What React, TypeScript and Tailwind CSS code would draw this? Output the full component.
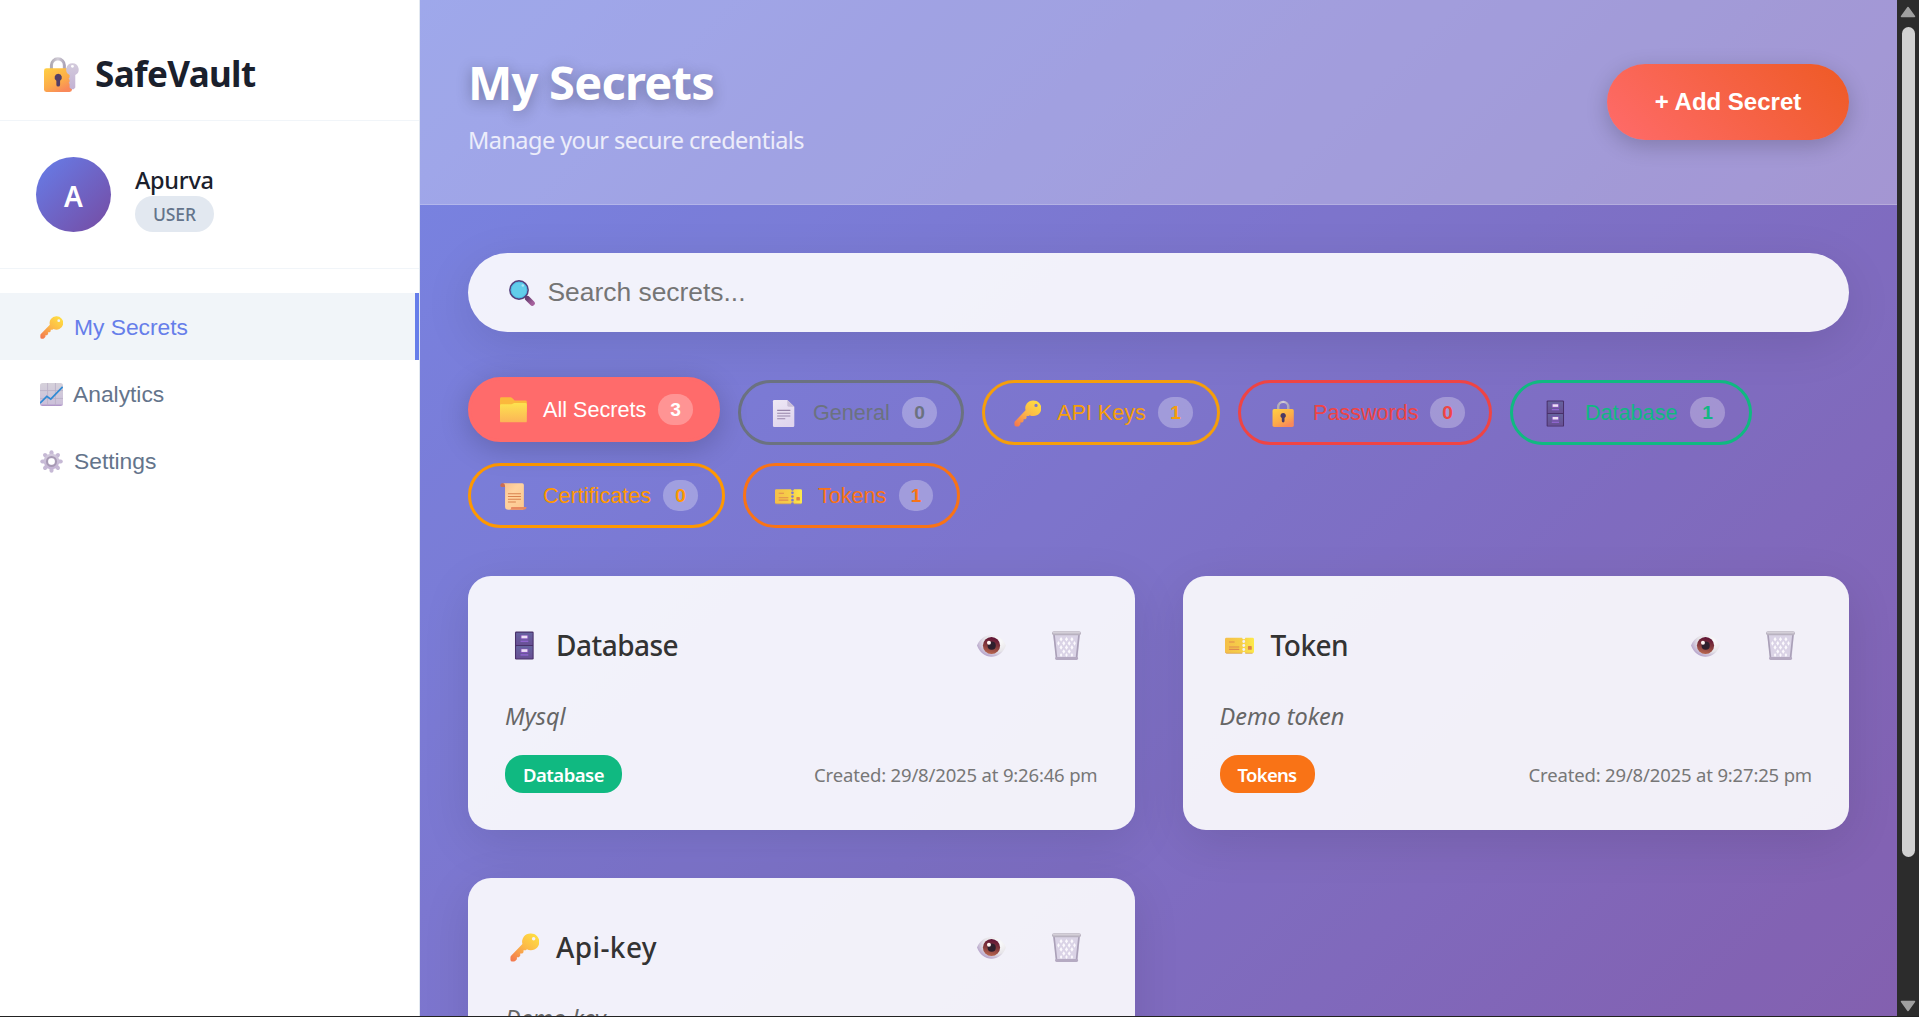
import type { ReactNode } from "react";

const NOTO = "font-['Noto_Sans',sans-serif]";
const ARIAL = "font-['Liberation_Sans',sans-serif]";

function Defs() {
  return (
    <svg className="absolute h-0 w-0" aria-hidden="true">
      <defs>
        <linearGradient id="gold" x1="0.9" y1="0" x2="0.1" y2="1">
          <stop offset="0" stopColor="#ffe141" />
          <stop offset="0.5" stopColor="#fcb848" />
          <stop offset="1" stopColor="#f3794f" />
        </linearGradient>
        <linearGradient id="body" x1="0" y1="0" x2="0.6" y2="1">
          <stop offset="0" stopColor="#ffd044" />
          <stop offset="0.65" stopColor="#fcab49" />
          <stop offset="1" stopColor="#f9895a" />
        </linearGradient>
        <linearGradient id="steel" x1="0" y1="0" x2="1" y2="0">
          <stop offset="0" stopColor="#b0abb5" />
          <stop offset="0.5" stopColor="#d2cdd8" />
          <stop offset="1" stopColor="#ada5b8" />
        </linearGradient>
        <linearGradient id="lilac" x1="0" y1="0" x2="0" y2="1">
          <stop offset="0" stopColor="#d3cbdc" />
          <stop offset="1" stopColor="#c3b2d4" />
        </linearGradient>
        <linearGradient id="chart" x1="0" y1="0" x2="0" y2="1">
          <stop offset="0" stopColor="#d5d1da" />
          <stop offset="0.9" stopColor="#ccc0da" />
          <stop offset="1" stopColor="#a98cc4" />
        </linearGradient>
        <linearGradient id="folder" x1="0" y1="0" x2="0" y2="1">
          <stop offset="0" stopColor="#fde34f" />
          <stop offset="1" stopColor="#fcb457" />
        </linearGradient>
        <linearGradient id="page" x1="0" y1="0" x2="0.4" y2="1">
          <stop offset="0" stopColor="#eee8f5" />
          <stop offset="1" stopColor="#e0d6ee" />
        </linearGradient>
        <linearGradient id="cabinet" x1="0" y1="0" x2="0" y2="1">
          <stop offset="0" stopColor="#66649f" />
          <stop offset="1" stopColor="#684f94" />
        </linearGradient>
        <linearGradient id="scroll" x1="0" y1="0" x2="1" y2="1">
          <stop offset="0" stopColor="#f9bf8d" />
          <stop offset="0.4" stopColor="#ffd3a0" />
          <stop offset="1" stopColor="#fbc78c" />
        </linearGradient>
        <linearGradient id="ticket" x1="0" y1="0" x2="1" y2="0">
          <stop offset="0" stopColor="#f5bf49" />
          <stop offset="0.6" stopColor="#f6d048" />
          <stop offset="1" stopColor="#fdea4c" />
        </linearGradient>
        <radialGradient id="eyeball" cx="0.7" cy="0.3" r="0.85">
          <stop offset="0" stopColor="#ffffff" />
          <stop offset="0.55" stopColor="#e6e4e8" />
          <stop offset="1" stopColor="#a58cc0" />
        </radialGradient>
        <linearGradient id="iris" x1="0.6" y1="0" x2="0.4" y2="1">
          <stop offset="0" stopColor="#5c1035" />
          <stop offset="0.5" stopColor="#82383c" />
          <stop offset="1" stopColor="#b9674f" />
        </linearGradient>
        <linearGradient id="handle" x1="0" y1="0" x2="1" y2="1">
          <stop offset="0" stopColor="#6b3f72" />
          <stop offset="1" stopColor="#a5609c" />
        </linearGradient>
      </defs>
    </svg>
  );
}

function Icon({ className, children }: { className: string; children: ReactNode }) {
  return (
    <svg viewBox="0 0 32 32" className={`shrink-0 ${className}`} aria-hidden="true">
      {children}
    </svg>
  );
}

type IconProps = { className: string };

function VaultLogo({ className }: IconProps) {
  return (
    <Icon className={className}>
      <path d="M6.8 12V7.600a5.900 5.900 0 0 1 11.800 0V12" fill="none" stroke="url(#steel)" strokeWidth="2.800" />
      <rect x="0" y="10.300" width="25.600" height="21.700" rx="2.200" fill="url(#body)" />
      <path d="M13 15.400a3.400 3.400 0 0 0-1.700 6.300v3.600a1.700 1.700 0 0 0 3.400 0v-3.600A3.400 3.400 0 0 0 13 15.400z" fill="#533f66" />
      <path
        d="M26 5.800a5.600 5.600 0 0 0-2.600 10.600v2.200l-.9 1.200.9 1.300v1.300l-.8 1.100.8 1.200v3.200l1.600 1.500h2.200l1.400-1.500V16.400A5.600 5.600 0 0 0 26 5.800zm0 1.400a1.300 1.300 0 1 1 0 2.700 1.300 1.300 0 0 1 0-2.700z"
        fill="url(#lilac)"
        fillRule="evenodd"
      />
    </Icon>
  );
}

function KeyIcon({ className }: IconProps) {
  return (
    <Icon className={className}>
      <path
        d="M22.5.5a9.200 9.200 0 0 0-8.800 11.700L1.200 25.200Q.5 26 .5 27v2.200a2.200 2.200 0 0 0 2.300 2.300h1.600q1 0 1.700-.8l1.500-1.700v-2.300h2.200l1.500-1.600v-2.400h2.300l1.300-1.400v-2.200h2.500l1.300-1.100A9.300 9.300 0 1 0 22.500.5zm3.600 4a1.900 1.900 0 1 1 0 3.900 1.900 1.900 0 0 1 0-3.900z"
        fill="url(#gold)"
        fillRule="evenodd"
      />
    </Icon>
  );
}

function ChartIcon({ className }: IconProps) {
  return (
    <Icon className={className}>
      <rect width="32" height="32" rx="3.5" fill="url(#chart)" />
      <path d="M10.5 0v31M21.5 0v31M0 10.5h32M0 21.5h32" stroke="#b9afc6" strokeWidth="1.1" />
      <path d="M0 28l9.500-9.500 5.500 4L31.500 5.500" fill="none" stroke="#2f8ad4" strokeWidth="2.400" />
    </Icon>
  );
}

function GearIcon({ className }: IconProps) {
  return (
    <Icon className={className}>
      <g stroke="#c6b9d5" strokeWidth="5.600" strokeLinecap="round">
        <path d="M16 3.200v25.700" />
        <path d="M3.200 16h25.700" />
        <path d="M7 7l18 18M25 7L7 25" />
      </g>
      <circle cx="16" cy="16" r="10.800" fill="url(#lilac)" />
      <circle cx="16" cy="16" r="6.200" fill="none" stroke="#a79ab4" strokeWidth="3" />
      <circle cx="16" cy="16" r="4.600" fill="#ffffff" />
    </Icon>
  );
}

function SearchIcon({ className }: IconProps) {
  return (
    <Icon className={className}>
      <path d="M20.500 20.500l8 8" stroke="#5b3a6c" strokeWidth="3" />
      <path d="M22.800 22.800l5.800 5.800" stroke="url(#handle)" strokeWidth="6.400" strokeLinecap="round" />
      <circle cx="12.300" cy="12.300" r="11.200" fill="#62cdea" stroke="#54407c" strokeWidth="2" />
      <circle cx="12.300" cy="12.300" r="9.700" fill="none" stroke="#48b4e0" strokeWidth="1" />
      <circle cx="17" cy="6.800" r="1.600" fill="#a9e6f5" />
    </Icon>
  );
}

function FolderIcon({ className }: IconProps) {
  return (
    <Icon className={className}>
      <path d="M0 2a1.600 1.600 0 0 1 1.600-1.600h10.800c.9 0 1.400.3 2 .9l3 2.800h12.800A1.600 1.600 0 0 1 31.800 5.700V18H0z" fill="#fbb83c" />
      <path d="M0 10.200q0-1.600 1.600-1.600h12l3.200-1.400h13.400q1.600 0 1.600 1.600v19.800q0 1.400-1.600 1.400H1.600Q0 30 0 28.600z" fill="url(#folder)" />
    </Icon>
  );
}

function PageIcon({ className }: IconProps) {
  return (
    <Icon className={className}>
      <path d="M3.500 1.400Q3.500 0 5 0h15.500L28.800 8v22.600q0 1.400-1.500 1.400H5q-1.500 0-1.500-1.400z" fill="url(#page)" />
      <path d="M20.500 0L28.800 8h-6.600q-1.700 0-1.700-1.700z" fill="#c9bfd8" />
      <path d="M8.500 12.300h15.600M8.500 15.600h15.600M8.500 19h15.600M8.500 22.300h9.600" stroke="#9685a9" strokeWidth="1.200" />
    </Icon>
  );
}

function LockIcon({ className }: IconProps) {
  return (
    <Icon className={className}>
      <path d="M9.700 12V8.200a6 6 0 0 1 12 0V12" fill="none" stroke="url(#steel)" strokeWidth="2.800" />
      <rect x="3" y="10.700" width="25.200" height="21.300" rx="2" fill="url(#body)" />
      <path d="M15.600 15.400a3.200 3.200 0 0 0-1.600 6v3.600a1.600 1.600 0 0 0 3.200 0v-3.600a3.200 3.200 0 0 0-1.600-6z" fill="#4b3a64" />
    </Icon>
  );
}

function CabinetIcon({ className }: IconProps) {
  return (
    <Icon className={className}>
      <rect x="5.500" y="0.500" width="20.600" height="31" rx="1.400" fill="#49306a" />
      <rect x="6.700" y="1.800" width="18.200" height="13.600" rx="0.600" fill="url(#cabinet)" />
      <rect x="6.700" y="16.600" width="18.200" height="13.800" rx="0.600" fill="url(#cabinet)" />
      <rect x="11.600" y="4.400" width="8.600" height="5" fill="#8255b8" />
      <rect x="12.600" y="5.100" width="6.600" height="3" fill="#eddff5" />
      <rect x="11.600" y="10.600" width="8.600" height="1.600" fill="#9065d0" />
      <rect x="11.600" y="19.400" width="8.600" height="5" fill="#8255b8" />
      <rect x="12.600" y="20.100" width="6.600" height="3" fill="#eddff5" />
      <rect x="11.600" y="25.600" width="8.600" height="1.600" fill="#9065d0" />
    </Icon>
  );
}

function ScrollIcon({ className }: IconProps) {
  return (
    <Icon className={className}>
      <path d="M.4 2.600Q.4.4 2.600.4H8v4.400H2.400Q.4 4.800.4 2.600z" fill="#c96b52" />
      <path d="M3.400.4h22.900q2 0 2 2v26l-1 3.400H9.600Q6 31.800 6 28.200V4.400Q6 .4 3.400.4z" fill="url(#scroll)" />
      <path d="M13.400 28.400h18q-.1 3.400-3.200 3.400H11.400q2 0 2-3.400z" fill="#e88a61" />
      <path d="M9.400 12.800h15.400M9.400 16h15.400M9.400 19.300h15.400M9.400 22.600h9.400" stroke="#d9824f" strokeWidth="1.300" />
    </Icon>
  );
}

function TicketIcon({ className }: IconProps) {
  return (
    <Icon className={className}>
      <path
        d="M0 9q0-1.600 1.600-1.600H19a1.700 1.700 0 0 0 3.400 0h8q1.600 0 1.600 1.600v14q0 1.600-1.600 1.600h-8a1.700 1.700 0 0 0-3.400 0H1.600Q0 24.600 0 23zM20.700 10a1.600 1.600 0 1 0 0 3.200 1.600 1.600 0 0 0 0-3.200zm0 4.400a1.600 1.600 0 1 0 0 3.200 1.600 1.600 0 0 0 0-3.200zm0 4.400a1.600 1.600 0 1 0 0 3.200 1.600 1.600 0 0 0 0-3.200z"
        fill="url(#ticket)"
        fillRule="evenodd"
      />
      <path d="M.4 23.600Q.9 24.600 1.600 24.600H19M22.400 24.600h8" stroke="#dba254" strokeWidth="0.900" fill="none" />
      <path d="M4.400 12.200h6.200M4.400 17.600h11.400M4.400 20.300h11.400" stroke="#df8a4f" strokeWidth="1.200" />
      <rect x="25.300" y="16.600" width="4.200" height="4.200" rx="0.800" fill="#dd8548" />
    </Icon>
  );
}

function EyeIcon({ className }: IconProps) {
  return (
    <Icon className={className}>
      <path d="M0 16C3 8.400 9 4.400 16 4.400S29 8.400 32 16C29 24 23 28.400 16 28.400S3 24 0 16z" fill="url(#eyeball)" />
      <circle cx="16" cy="16" r="9.500" fill="url(#iris)" />
      <circle cx="16.200" cy="16.200" r="4.500" fill="#2e1f2d" />
      <circle cx="13.200" cy="13" r="2.200" fill="#fff4f2" />
    </Icon>
  );
}

function TrashIcon({ className }: IconProps) {
  return (
    <Icon className={className}>
      <path d="M1.200 3.500h29.600L28.300 31H4.700z" fill="#dad3e6" />
      <g fill="#fbf9fd">
        <path d="M10 6.500l1.700 2.600L10 11.700 8.300 9.100zM16 6.500l1.700 2.600-1.700 2.600-1.700-2.600zM22 6.500l1.700 2.600-1.700 2.600-1.700-2.600z" />
        <path d="M13 11l1.700 2.600-1.700 2.600-1.700-2.600zM19 11l1.700 2.600-1.700 2.600-1.700-2.600zM25 11l1.300 2.600-1.300 2.600-1.700-2.600zM7 11l1.700 2.600L7 16.200l-1.300-2.600z" />
        <path d="M10 15.500l1.700 2.600-1.700 2.600-1.700-2.600zM16 15.500l1.700 2.600-1.700 2.600-1.700-2.600zM22 15.500l1.700 2.600-1.700 2.600-1.700-2.600z" />
        <path d="M13 20l1.700 2.600-1.700 2.600-1.700-2.600zM19 20l1.700 2.600-1.700 2.600-1.700-2.600z" />
        <path d="M10 24.300l1.400 2.200L10 28.600l-1.400-2.100zM16 24.300l1.400 2.200-1.400 2.100-1.400-2.100zM22 24.300l1.400 2.200-1.400 2.100-1.400-2.100z" />
      </g>
      <path d="M2.200 4l2.800 26M29.800 4L27 30" stroke="#aaa0b8" strokeWidth="1.800" />
      <rect x="0" y="0.300" width="32" height="4.400" rx="2.200" fill="#b9b2c0" />
      <rect x="1" y="0.900" width="30" height="1.800" rx="0.900" fill="#d4cfd8" />
      <rect x="3.400" y="28.600" width="25.400" height="3.300" rx="1.600" fill="#b5aac2" />
    </Icon>
  );
}

const NAV = [
  { label: "My Secrets", Glyph: KeyIcon, gap: "mr-[11px]", row: "bg-[#f1f5f9] text-[#667eea] border-r-4 border-[#667eea]" },
  { label: "Analytics", Glyph: ChartIcon, gap: "mr-[10px]", row: "text-[#64748b]" },
  { label: "Settings", Glyph: GearIcon, gap: "mr-[11px]", row: "text-[#64748b]" },
];

function Sidebar() {
  return (
    <aside className="flex w-[420px] shrink-0 flex-col border-r border-[#e2e8f0] bg-white">
      <div className="flex h-[121px] items-center gap-[16px] border-b border-[#f1f5f9] pl-11 pt-[27px]">
        <VaultLogo className="mt-[2px] h-[35px] w-[35px]" />
        <span className={`${NOTO} pt-[2px] text-[35px] font-bold tracking-[-0.620px] text-[#1a202c]`}>SafeVault</span>
      </div>
      <div className="flex h-[148px] gap-6 border-b border-[#f1f5f9] pl-9 pt-9">
        <div
          className={`${NOTO} flex h-[75px] w-[75px] items-center justify-center rounded-full bg-[linear-gradient(135deg,#667eea,#764ba2)] pt-[3px] text-[28px] font-semibold text-white`}
        >
          A
        </div>
        <div className={`${NOTO} flex flex-col items-start pt-[5px]`}>
          <span className="h-[34px] text-[23.500px] font-medium leading-[36px] tracking-[-0.300px] text-[#1a202c]">
            Apurva
          </span>
          <span className="h-9 w-[79px] rounded-[18px] bg-[#e2e8f0] text-center text-[17.500px] font-medium leading-9 tracking-[-0.090px] text-[#64748b]">
            USER
          </span>
        </div>
      </div>
      <nav className="mt-6 flex flex-col">
        {NAV.map(({ label, Glyph, gap, row }) => (
          <a key={label} className={`${ARIAL} flex h-[67px] items-center pl-10 text-[22.800px] ${row}`}>
            <Glyph className={`mt-[2px] h-[23px] w-[23px] ${gap}`} />
            <span className="pt-px">{label}</span>
          </a>
        ))}
      </nav>
    </aside>
  );
}

const FILTERS = [
  { label: "All Secrets", count: 3, Glyph: FolderIcon, pill: "w-[252px] -translate-y-[3px] border-[#ff6b6b] bg-[#ff6b6b] text-white shadow-[0_6px_30px_rgba(0,0,0,0.2)]", badge: "w-[35px]" },
  { label: "General", count: 0, Glyph: PageIcon, pill: "w-[226px] border-[#6b7280] text-[#6b7280]", badge: "w-[35px]" },
  { label: "API Keys", count: 1, Glyph: KeyIcon, pill: "w-[238px] border-[#f59e0b] text-[#f59e0b]", badge: "w-[35px]" },
  { label: "Passwords", count: 0, Glyph: LockIcon, pill: "w-[254px] border-[#ef4444] text-[#ef4444]", badge: "w-[35px]" },
  { label: "Database", count: 1, Glyph: CabinetIcon, pill: "w-[242px] border-[#10b981] text-[#10b981]", badge: "w-[35px]" },
  { label: "Certificates", count: 0, Glyph: ScrollIcon, pill: "w-[257px] border-[#ff9800] text-[#ff9800]", badge: "w-[35px]" },
  { label: "Tokens", count: 1, Glyph: TicketIcon, pill: "w-[217px] border-[#f97316] text-[#f97316]", badge: "w-[34px]" },
];

function Filters() {
  return (
    <div className="mt-12 flex flex-wrap gap-[18px]">
      {FILTERS.map(({ label, count, Glyph, pill, badge }) => (
        <button
          key={label}
          className={`${ARIAL} flex h-[65px] items-center rounded-full border-[3px] pl-[29px] pr-6 text-[21.600px] ${pill}`}
        >
          <Glyph className="mr-[16px] mt-[2px] h-[27px] w-[27px]" />
          <span className="whitespace-nowrap pt-[2px]">{label}</span>
          <span
            className={`ml-auto h-[31px] rounded-full bg-white/[0.280] text-center text-[19.200px] font-bold leading-[31px] ${badge}`}
          >
            {count}
          </span>
        </button>
      ))}
    </div>
  );
}

const SECRETS = [
  {
    name: "Database", nameClass: "tracking-[-0.520px]", note: "Mysql", tag: "Database", created: "29/8/2025 at 9:26:46 pm",
    Glyph: CabinetIcon, tagClass: "w-[117px] bg-[#10b981] tracking-[-0.510px]",
  },
  {
    name: "Token", nameClass: "tracking-[-0.500px]", note: "Demo token", tag: "Tokens", created: "29/8/2025 at 9:27:25 pm",
    Glyph: TicketIcon, tagClass: "w-[95px] bg-[#f97316] tracking-[-0.710px]",
  },
  {
    name: "Api-key", nameClass: "tracking-[0.400px]", note: "Demo key", tag: "API Keys", created: "29/8/2025 at 9:26:12 pm",
    Glyph: KeyIcon, tagClass: "w-[117px] bg-[#f59e0b] tracking-[-0.510px]",
  },
];

function SecretCard({ name, nameClass, note, tag, created, Glyph, tagClass }: (typeof SECRETS)[number]) {
  return (
    <article className={`${NOTO} h-[254px] rounded-[23px] bg-white/90 p-[37px] shadow-[0_12px_48px_rgba(0,0,0,0.1)]`}>
      <div className="flex h-[65px] items-center pl-[5px] pr-[17px]">
        <Glyph className="mr-[17px] h-[29px] w-[29px]" />
        <h3 className={`text-[28px] font-medium leading-[65px] text-[#333333] ${nameClass}`}>{name}</h3>
        <div className="ml-auto flex gap-[46px]">
          <EyeIcon className="h-[29px] w-[29px]" />
          <TrashIcon className="h-[29px] w-[29px]" />
        </div>
      </div>
      <p className="mt-5 text-[23.500px] italic leading-9 text-[#666666]">{note}</p>
      <div className="mt-[21px] flex h-[38px] items-center justify-between">
        <span
          className={`h-[38px] rounded-[18px] pt-px text-center text-[18.500px] font-semibold leading-[38px] text-white ${tagClass}`}
        >
          {tag}
        </span>
        <span className="pt-[2px] text-[18.500px] tracking-[-0.170px] text-[#777777]">Created: {created}</span>
      </div>
    </article>
  );
}

function ScrollRail() {
  return (
    <div className="flex w-[22px] shrink-0 flex-col items-center bg-[#2c2c2c]">
      <svg viewBox="0 0 16 12" className="mt-[6px] h-3 w-4">
        <path d="M8 1.500L14.500 10.500H1.500z" fill="#a0a0a0" stroke="#a0a0a0" strokeWidth="1.500" strokeLinejoin="round" />
      </svg>
      <div className="ml-px mt-[9px] h-[830px] w-[13px] rounded-full bg-[#d1d1d1]" />
      <svg viewBox="0 0 16 12" className="mb-1 mt-auto h-3 w-4">
        <path d="M8 10.500L14.500 1.500H1.500z" fill="#a0a0a0" stroke="#a0a0a0" strokeWidth="1.500" strokeLinejoin="round" />
      </svg>
    </div>
  );
}

export default function App() {
  return (
    <div className="h-[1017px] w-full overflow-hidden border-b border-[#222222] bg-white">
      <Defs />
      <div className="flex h-[1016px]">
        <div className="flex min-w-0 flex-1 overflow-hidden bg-[linear-gradient(135deg,#667eea_0%,#764ba2_100%)] bg-[length:1897px_1197px] bg-no-repeat">
          <Sidebar />
          <main className="min-w-0 flex-1 bg-white/10">
            <header className="flex h-[205px] items-center justify-between border-b border-white/20 bg-white/[0.290] px-12">
              <div className={NOTO}>
                <h1 className="text-[47px] font-bold leading-[70px] tracking-[-0.770px] text-white [text-shadow:0_3px_15px_rgba(0,0,0,0.3)]">
                  My Secrets
                </h1>
                <p className="mb-[2px] mt-[7px] text-[23.500px] leading-8 tracking-[-0.550px] text-white/80">
                  Manage your secure credentials
                </p>
              </div>
              <button
                className={`${ARIAL} h-[76px] w-[242px] rounded-full bg-[linear-gradient(45deg,#ff6b6b,#ee5a24)] text-[24px] font-bold text-white shadow-[0_6px_22px_rgba(0,0,0,0.2)]`}
              >
                + Add Secret
              </button>
            </header>
            <section className="px-12 pt-12">
              <div className="flex h-[79px] items-center rounded-full bg-white/90 pl-[41px] shadow-[0_12px_48px_rgba(0,0,0,0.1)]">
                <SearchIcon className="h-[26px] w-[26px]" />
                <input
                  placeholder="Search secrets..."
                  className={`${ARIAL} ml-[12.500px] flex-1 bg-transparent text-[26.400px] text-[#333333] outline-none placeholder:text-[#757575]`}
                />
              </div>
              <Filters />
              <div className="mt-12 grid grid-cols-2 gap-12">
                {SECRETS.map((secret) => (
                  <SecretCard key={secret.name} {...secret} />
                ))}
              </div>
            </section>
          </main>
        </div>
        <ScrollRail />
      </div>
    </div>
  );
}
